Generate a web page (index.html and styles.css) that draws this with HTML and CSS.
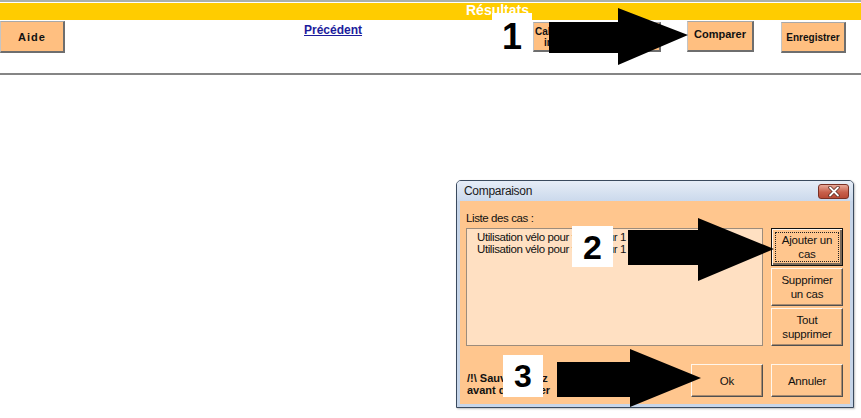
FILE: index.html
```html
<!DOCTYPE html>
<html lang="fr">
<head>
<meta charset="utf-8">
<title>Résultats</title>
<link rel="stylesheet" href="styles.css">
</head>
<body>
<div class="page">
  <header class="top">
    <div class="band"><span class="band-title">Résultats</span></div>
    <div class="toolbar">
      <button class="tb-btn btn-aide">Aide</button>
      <a class="prev-link" href="#">Précédent</a>
      <button class="tb-btn btn-calc"><span class="calc-l1">Calculer les émissions de CO2</span><span class="calc-l2">impact carbone</span></button>
      <button class="tb-btn btn-compare">Comparer</button>
      <button class="tb-btn btn-save">Enregistrer</button>
    </div>
  </header>

  <div class="dialog">
    <div class="dlg-title">
      <span>Comparaison</span>
      <span class="dlg-close">
        <svg width="14" height="11" viewBox="0 0 14 11"><path d="M3 1.5 L11 9.5 M11 1.5 L3 9.5" stroke="#5a2a22" stroke-width="3.4" stroke-linecap="round"/><path d="M3 1.5 L11 9.5 M11 1.5 L3 9.5" stroke="#fff" stroke-width="1.8" stroke-linecap="round"/></svg>
      </span>
    </div>
    <div class="dlg-body">
      <div class="dlg-label">Liste des cas :</div>
      <div class="dlg-main">
        <div class="case-list">
          <div>Utilisation vélo pour travailleur 1 - 4 km - 2 j/sem (été)</div>
          <div>Utilisation vélo pour travailleur 1 - 10 km</div>
        </div>
        <div class="side-btns">
          <button class="dlg-btn is-default">Ajouter un cas</button>
          <button class="dlg-btn">Supprimer un cas</button>
          <button class="dlg-btn">Tout supprimer</button>
        </div>
      </div>
      <div class="dlg-foot">
        <div class="warning">/!\ Sauvegardez<br>avant de valider</div>
        <button class="dlg-btn foot-btn">Ok</button>
        <button class="dlg-btn foot-btn">Annuler</button>
      </div>
    </div>
  </div>

  <svg class="arrows" width="861" height="418" viewBox="0 0 861 418">
    <polygon points="549,22 618,22 618,8 688,35 618,65 618,53 549,53"/>
    <polygon points="628,230 698,230 698,218 774,249 698,281 698,265 628,265"/>
    <polygon points="557,362 630,362 630,349 701,378 630,407 630,397 557,397"/>
  </svg>

  <div class="step step-1">1</div>
  <div class="step step-2">2</div>
  <div class="step step-3">3</div>
</div>
</body>
</html>
```

FILE: styles.css
```css
* { box-sizing: border-box; }

body {
  margin: 0;
  background: #fff;
  font-family: "Liberation Sans", Arial, sans-serif;
}

.page {
  position: relative;
  width: 861px;
  height: 418px;
  overflow: hidden;
  background: #fff;
}

/* ---------- header ---------- */
.top {
  border-top: 2px solid #aab0aa;
  padding-top: 1px;
}

.band {
  height: 17px;
  background: #ffcc00;
  padding-left: 466px;
}

.band-title {
  display: block;
  color: #fff;
  font-weight: bold;
  font-size: 14px;
  line-height: 15px;
}

.toolbar {
  display: flex;
  align-items: flex-start;
  height: 55px;
  border-bottom: 2px solid #858585;
}

.tb-btn {
  background: #ffbf80;
  border-style: solid;
  border-color: #a8a8a8 #6e6e6e #6e6e6e #c4c4c4;
  border-width: 1px 2px 2px 1px;
  font-family: "Liberation Sans", Arial, sans-serif;
  font-weight: bold;
  color: #111;
  padding: 0;
  flex: none;
}

.btn-aide {
  width: 65px;
  height: 32px;
  margin-top: 1px;
  font-size: 11px;
  letter-spacing: 1px;
}

.prev-link {
  margin-left: 239px;
  margin-top: 3px;
  font-size: 12px;
  line-height: 14px;
  font-weight: bold;
  color: #1c1c9c;
  flex: none;
}

.btn-calc {
  margin-left: 171px;
  width: 128px;
  height: 30px;
  margin-top: 2px;
  font-size: 10px;
  line-height: 11px;
  display: flex;
  flex-direction: column;
  justify-content: center;
  overflow: hidden;
}

.calc-l1 { text-align: left; padding-left: 1px; white-space: nowrap; }
.calc-l2 { text-align: left; padding-left: 10px; white-space: nowrap; }

.btn-compare {
  margin-left: 26px;
  width: 67px;
  height: 31px;
  margin-top: 1px;
  font-size: 11px;
  padding-bottom: 4px;
}

.btn-save {
  margin-left: 27px;
  width: 65px;
  height: 31px;
  margin-top: 2px;
  font-size: 10px;
}

/* ---------- dialog ---------- */
.dialog {
  position: absolute;
  left: 456px;
  top: 180px;
  width: 398px;
  height: 228px;
  border: 1px solid #3a4a5e;
  border-radius: 5px 5px 0 0;
  background: #c6d5e9;
  padding: 0 3px 3px;
  display: flex;
  flex-direction: column;
  box-shadow: 1px 1px 2px rgba(0, 0, 0, 0.25);
}

.dlg-title {
  height: 20px;
  flex: none;
  display: flex;
  align-items: center;
  justify-content: space-between;
  margin: 0 -3px;
  padding: 0 4px 0 7px;
  border-radius: 4px 4px 0 0;
  background: linear-gradient(#e6edf7, #cbd9ec);
  font-size: 12px;
  letter-spacing: -0.3px;
  color: #1a1a1a;
}

.dlg-close {
  width: 31px;
  height: 15px;
  border: 1px solid #7a3024;
  border-radius: 3px;
  background: linear-gradient(#e8aa9a, #c8604c 55%, #b84a36);
  display: flex;
  align-items: center;
  justify-content: center;
}

.dlg-body {
  flex: 1;
  background: #ffc68e;
  padding: 10px 7px 0 6px;
  font-size: 11.5px;
  color: #111;
}

.dlg-label {
  line-height: 14px;
  letter-spacing: -0.4px;
}

.dlg-main {
  display: flex;
  gap: 8px;
  margin-top: 3px;
}

.case-list {
  width: 297px;
  height: 118px;
  background: #ffe0c2;
  border: 1px solid #9c8c7c;
  padding: 2px 10px;
  line-height: 12px;
  letter-spacing: -0.4px;
  white-space: nowrap;
  overflow: hidden;
}

.side-btns {
  display: flex;
  flex-direction: column;
  gap: 2px;
}

.dlg-btn {
  width: 72px;
  height: 38px;
  padding: 0 3px;
  background: #ffc68e;
  border: 1px solid;
  border-color: #fff6ec #505050 #505050 #fff6ec;
  box-shadow: inset -1px -1px 0 #a88a6e;
  font-family: "Liberation Sans", Arial, sans-serif;
  font-size: 11.5px;
  letter-spacing: -0.2px;
  line-height: 14px;
  color: #111;
}

.dlg-btn.is-default {
  position: relative;
  border-color: #111;
  box-shadow: inset 1px 1px 0 #fff6ec, inset -2px -2px 0 #7a6a5a;
}

.dlg-btn.is-default::after {
  content: "";
  position: absolute;
  inset: 3px;
  border: 1px dotted #222;
}

.dlg-foot {
  display: flex;
  align-items: flex-end;
  gap: 8px;
  margin-top: 18px;
}

.warning {
  flex: 1;
  padding: 0 0 1px 1px;
  font-size: 11px;
  font-weight: bold;
  line-height: 12px;
  white-space: nowrap;
}

.foot-btn {
  height: 33px;
}

/* ---------- annotations ---------- */
.arrows {
  position: absolute;
  left: 0;
  top: 0;
  fill: #000;
  pointer-events: none;
}

.step {
  position: absolute;
  background: #fff;
  color: #000;
  font-family: "Liberation Sans", Arial, sans-serif;
  font-weight: bold;
  display: flex;
  align-items: center;
  justify-content: center;
  line-height: 1;
}

.step-1 { left: 492px; top: 13px; width: 40px; height: 47px; font-size: 36px; }
.step-2 { left: 572px; top: 226px; width: 41px; height: 41px; font-size: 34px; }
.step-3 { left: 503px; top: 355px; width: 40px; height: 42px; font-size: 32px; }
```
